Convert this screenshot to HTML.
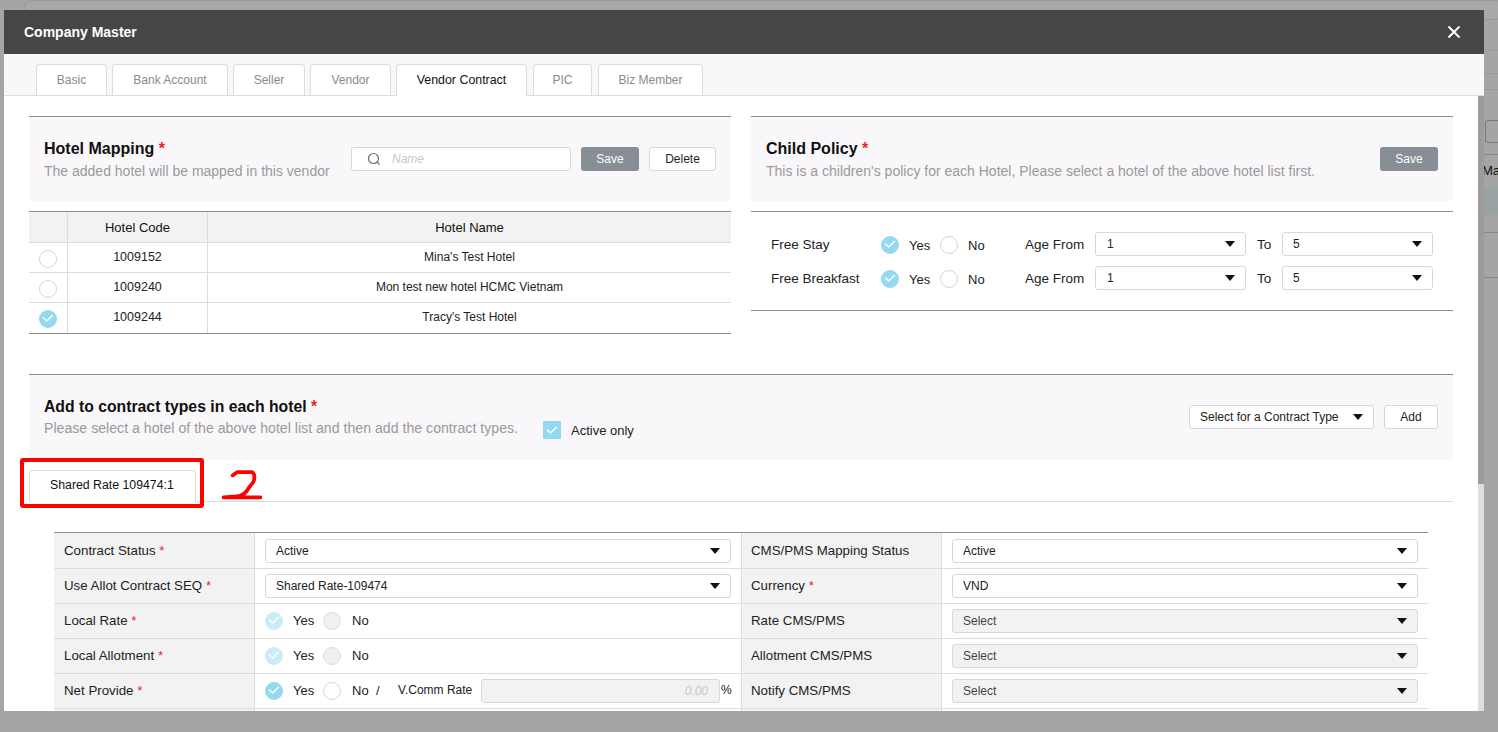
<!DOCTYPE html>
<html><head><meta charset="utf-8">
<style>
*{box-sizing:border-box;margin:0;padding:0}
html,body{width:1498px;height:732px;overflow:hidden;background:#a5a5a5;font-family:"Liberation Sans",sans-serif;color:#222}
.a{position:absolute}
.t{position:absolute;white-space:nowrap;line-height:1}
#bgtab{left:24px;top:0px;width:1480px;height:20px;border:1px solid #999;border-radius:8px;background:#a8a7aa}
#modal{left:4px;top:10px;width:1480px;height:701px;background:#fff;overflow:hidden}
#hdr{left:4px;top:10px;width:1480px;height:44px;background:#464646}
#tabbar{left:4px;top:54px;width:1480px;height:42px;background:#f8f7fa;border-bottom:1px solid #dcdcdc}
.tab{position:absolute;top:10px;height:31px;border:1px solid #dcdcdc;border-bottom:none;border-radius:4px 4px 0 0;background:#fff;color:#8a8a8a;font-size:12px;text-align:center;line-height:30px}
.tab.on{color:#111;height:32px;font-size:12.4px}
.sbox{position:absolute;background:#f9f7fa;border-top:1px solid #8c8c8c}
.ttl{font-size:16px;font-weight:700;color:#111}
.req{color:#e8262a}
.sub{font-size:14px;color:#9a9a9a}
.btn-g{position:absolute;background:#878e95;color:#fff;border-radius:3px;font-size:12px;text-align:center}
.btn-w{position:absolute;background:#fff;color:#222;border:1px solid #d8d8d8;border-radius:3px;font-size:12px;text-align:center}
.inp{position:absolute;background:#fff;border:1px solid #d8d8d8;border-radius:3px}
.radio{position:absolute;width:18px;height:18px;border-radius:50%;border:1px solid #d6d6d6;background:#fff}
.radio.on{background:#93d9f0;border-color:#93d9f0}
.radio.dis{background:#c9ecf7;border-color:#c9ecf7}
.radio.gray{background:#f0f0f0;border-color:#dcdcdc}
.chk{position:absolute;left:4px;top:4px;width:9px;height:5px;border-left:1.5px solid #fff;border-bottom:1.5px solid #fff;transform:rotate(-45deg)}
.arr{position:absolute;width:0;height:0;border-left:5px solid transparent;border-right:5px solid transparent;border-top:6px solid #111}
.sel{position:absolute;background:#fff;border:1px solid #d8d8d8;border-radius:3px;font-size:12.5px;color:#222}
.sel.dis{background:#f2f2f2}
.flab{font-size:13.3px;color:#222}
.line{position:absolute;height:1px}
.vline{position:absolute;width:1px}
</style></head><body>
<div class="a" id="bgtab"></div>
<!-- background right details -->
<div class="a" style="left:1484px;top:50px;width:14px;height:1px;background:#999"></div>
<div class="a" style="left:1484px;top:73px;width:14px;height:1px;background:#999"></div>
<div class="a" style="left:1484px;top:89px;width:14px;height:1px;background:#999"></div>
<div class="a" style="left:1485px;top:120px;width:20px;height:23px;border:1px solid #777;border-radius:3px"></div>
<div class="a" style="left:1484px;top:154px;width:14px;height:1px;background:#888"></div>
<div class="t" style="left:1482px;top:164px;font-size:13px;color:#111">Ma</div>
<div class="a" style="left:1484px;top:187px;width:14px;height:28px;background:#9aa2a4"></div>
<div class="a" style="left:1484px;top:232px;width:14px;height:1px;background:#888"></div>
<div class="a" style="left:1484px;top:277px;width:14px;height:1px;background:#888"></div>

<div class="a" id="modal"></div>
<div class="a" id="hdr">
  <div class="t" style="left:20px;top:15px;font-size:14px;font-weight:700;color:#fff">Company Master</div>
  <svg class="a" style="left:1443px;top:15px" width="14" height="14" viewBox="0 0 14 14"><path d="M1.5 1.5L12.5 12.5M12.5 1.5L1.5 12.5" stroke="#fff" stroke-width="2"/></svg>
</div>
<div class="a" id="tabbar">
  <div class="tab" style="left:32px;width:71px">Basic</div>
  <div class="tab" style="left:108px;width:116px">Bank Account</div>
  <div class="tab" style="left:229px;width:72px">Seller</div>
  <div class="tab" style="left:306px;width:81px">Vendor</div>
  <div class="tab on" style="left:392px;width:131px">Vendor Contract</div>
  <div class="tab" style="left:529px;width:59px">PIC</div>
  <div class="tab" style="left:594px;width:105px">Biz Member</div>
</div>
<!-- scrollbar -->
<div class="a" style="left:1478px;top:96px;width:6px;height:615px;background:#dfdfdf"></div>
<div class="a" style="left:1478px;top:96px;width:6px;height:388px;background:#9c9c9c"></div>

<!-- Hotel Mapping section -->
<div class="sbox" style="left:29px;top:116px;width:702px;height:85px"></div>
<div class="t ttl" style="left:44px;top:141px">Hotel Mapping <span class="req">*</span></div>
<div class="t sub" style="left:44px;top:164px">The added hotel will be mapped in this vendor</div>
<div class="inp" style="left:351px;top:147px;width:220px;height:24px"></div>
<svg class="a" style="left:367px;top:152px" width="14" height="14" viewBox="0 0 14 14"><circle cx="6.5" cy="6.5" r="5" fill="none" stroke="#707070" stroke-width="1.2"/><path d="M10 10L12.5 12.5" stroke="#707070" stroke-width="1.3"/></svg>
<div class="t" style="left:392px;top:153px;font-size:12px;font-style:italic;color:#c8c8c8">Name</div>
<div class="btn-g" style="left:581px;top:147px;width:58px;height:24px;line-height:24px">Save</div>
<div class="btn-w" style="left:649px;top:147px;width:67px;height:24px;line-height:22px">Delete</div>

<!-- Hotel table -->
<div class="a" style="left:29px;top:211px;width:702px;height:1px;background:#8c8c8c"></div>
<div class="a" style="left:29px;top:212px;width:702px;height:30px;background:#f2f2f2"></div>
<div class="a" style="left:29px;top:242px;width:702px;height:1px;background:#dcdcdc"></div>
<div class="a" style="left:29px;top:272px;width:702px;height:1px;background:#dcdcdc"></div>
<div class="a" style="left:29px;top:302px;width:702px;height:1px;background:#dcdcdc"></div>
<div class="a" style="left:29px;top:333px;width:702px;height:1px;background:#8c8c8c"></div>
<div class="a" style="left:67px;top:212px;width:1px;height:121px;background:#dcdcdc"></div>
<div class="a" style="left:207px;top:212px;width:1px;height:121px;background:#dcdcdc"></div>
<div class="t" style="left:68px;width:139px;text-align:center;top:221px;font-size:13px;color:#111">Hotel Code</div>
<div class="t" style="left:208px;width:523px;text-align:center;top:221px;font-size:13px;color:#111">Hotel Name</div>
<div class="radio" style="left:39px;top:250px"></div>
<div class="radio" style="left:39px;top:280px"></div>
<div class="radio on" style="left:39px;top:310px"><svg class="a" style="left:-1px;top:-1px" width="18" height="18" viewBox="0 0 18 18"><path d="M4 7.4L7.7 11L13.8 5" fill="none" stroke="#fff" stroke-width="1.4"/></svg></div>
<div class="t" style="left:68px;width:139px;text-align:center;top:251px;font-size:12.5px;color:#222">1009152</div>
<div class="t" style="left:68px;width:139px;text-align:center;top:281px;font-size:12.5px;color:#222">1009240</div>
<div class="t" style="left:68px;width:139px;text-align:center;top:311px;font-size:12.5px;color:#222">1009244</div>
<div class="t" style="left:208px;width:523px;text-align:center;top:251px;font-size:12px;color:#222">Mina's Test Hotel</div>
<div class="t" style="left:208px;width:523px;text-align:center;top:281px;font-size:12px;color:#222">Mon test new hotel HCMC Vietnam</div>
<div class="t" style="left:208px;width:523px;text-align:center;top:311px;font-size:12px;color:#222">Tracy's Test Hotel</div>

<!-- Child Policy section -->
<div class="sbox" style="left:751px;top:116px;width:702px;height:85px"></div>
<div class="t ttl" style="left:766px;top:141px">Child Policy <span class="req">*</span></div>
<div class="t sub" style="left:766px;top:164px">This is a children's policy for each Hotel, Please select a hotel of the above hotel list first.</div>
<div class="btn-g" style="left:1380px;top:147px;width:58px;height:24px;line-height:24px">Save</div>
<div class="a" style="left:751px;top:211px;width:702px;height:1px;background:#8c8c8c"></div>
<div class="a" style="left:751px;top:310px;width:702px;height:1px;background:#8c8c8c"></div>

<div class="t" style="left:771px;top:238px;font-size:13.5px;color:#222">Free Stay</div>
<div class="t" style="left:771px;top:272px;font-size:13.5px;color:#222">Free Breakfast</div>
<div class="radio on" style="left:881px;top:236px"><svg class="a" style="left:-1px;top:-1px" width="18" height="18" viewBox="0 0 18 18"><path d="M4 7.4L7.7 11L13.8 5" fill="none" stroke="#fff" stroke-width="1.4"/></svg></div>
<div class="radio on" style="left:881px;top:270px"><svg class="a" style="left:-1px;top:-1px" width="18" height="18" viewBox="0 0 18 18"><path d="M4 7.4L7.7 11L13.8 5" fill="none" stroke="#fff" stroke-width="1.4"/></svg></div>
<div class="t" style="left:909px;top:239px;font-size:13px;color:#222">Yes</div>
<div class="t" style="left:909px;top:273px;font-size:13px;color:#222">Yes</div>
<div class="radio" style="left:940px;top:236px"></div>
<div class="radio" style="left:940px;top:270px"></div>
<div class="t" style="left:968px;top:239px;font-size:13px;color:#222">No</div>
<div class="t" style="left:968px;top:273px;font-size:13px;color:#222">No</div>
<div class="t" style="left:1025px;top:238px;font-size:13.5px;color:#222">Age From</div>
<div class="t" style="left:1025px;top:272px;font-size:13.5px;color:#222">Age From</div>
<div class="sel" style="left:1095px;top:232px;width:151px;height:24px"><div class="t" style="left:11px;top:5px;font-size:12px">1</div><div class="arr" style="left:129px;top:8px"></div></div>
<div class="sel" style="left:1095px;top:266px;width:151px;height:24px"><div class="t" style="left:11px;top:5px;font-size:12px">1</div><div class="arr" style="left:129px;top:8px"></div></div>
<div class="t" style="left:1257px;top:238px;font-size:13.5px;color:#222">To</div>
<div class="t" style="left:1257px;top:272px;font-size:13.5px;color:#222">To</div>
<div class="sel" style="left:1282px;top:232px;width:151px;height:24px"><div class="t" style="left:10px;top:5px;font-size:12px">5</div><div class="arr" style="left:129px;top:8px"></div></div>
<div class="sel" style="left:1282px;top:266px;width:151px;height:24px"><div class="t" style="left:10px;top:5px;font-size:12px">5</div><div class="arr" style="left:129px;top:8px"></div></div>

<!-- Contract types section -->
<div class="sbox" style="left:29px;top:374px;width:1424px;height:86px"></div>
<div class="t ttl" style="left:44px;top:399px;font-size:15.75px">Add to contract types in each hotel <span class="req">*</span></div>
<div class="t sub" style="left:44px;top:421px;font-size:14.15px">Please select a hotel of the above hotel list and then add the contract types.</div>
<div class="a" style="left:543px;top:421px;width:18px;height:18px;background:#93d9f0;border-radius:1px"><svg class="a" style="left:0;top:1px" width="18" height="18" viewBox="0 0 18 18"><path d="M4 7.4L7.7 11L13.8 5" fill="none" stroke="#fff" stroke-width="1.4"/></svg></div>
<div class="t" style="left:571px;top:424px;font-size:13px;color:#222">Active only</div>
<div class="sel" style="left:1189px;top:405px;width:185px;height:24px"><div class="t" style="left:10px;top:5px;font-size:12px">Select for a Contract Type</div><div class="arr" style="left:163px;top:8px"></div></div>
<div class="btn-w" style="left:1384px;top:405px;width:54px;height:24px;line-height:22px">Add</div>

<!-- contract tab -->
<div class="a" style="left:29px;top:501px;width:1424px;height:1px;background:#dcdcdc"></div>
<div class="a" style="left:29px;top:470px;width:167px;height:32px;background:#fff;border:1px solid #dcdcdc;border-bottom:none;border-radius:3px 3px 0 0"></div>
<div class="t" style="left:50px;top:479px;font-size:12.3px;color:#111">Shared Rate 109474:1</div>
<div class="a" style="left:20px;top:458px;width:184px;height:50px;border:4.5px solid #fe0000;border-radius:3px"></div>
<svg class="a" style="left:210px;top:460px" width="60" height="45" viewBox="210 460 60 45"><path d="M232.6 475.4 L237 472.2 L252.2 472.2 Q254.6 473.6 254.4 478 Q254.2 482 251 485 Q249 487.5 247.5 490 Q245 494 240 495.8 L236 496.3 L223.5 497.3 L260.5 497.3" fill="none" stroke="#fe0000" stroke-width="3.7" stroke-linecap="round" stroke-linejoin="round"/></svg>

<!-- form table -->
<div class="a" style="left:54px;top:532px;width:1374px;height:1px;background:#8c8c8c"></div>
<div class="a" style="left:54px;top:533px;width:200px;height:178px;background:#f2f2f2"></div>
<div class="a" style="left:741px;top:533px;width:200px;height:178px;background:#f2f2f2"></div>
<div class="a" style="left:254px;top:533px;width:1px;height:178px;background:#dcdcdc"></div>
<div class="a" style="left:741px;top:533px;width:1px;height:178px;background:#dcdcdc"></div>
<div class="a" style="left:941px;top:533px;width:1px;height:178px;background:#dcdcdc"></div>
<div class="a" style="left:54px;top:568px;width:1374px;height:1px;background:#dcdcdc"></div>
<div class="a" style="left:54px;top:603px;width:1374px;height:1px;background:#dcdcdc"></div>
<div class="a" style="left:54px;top:638px;width:1374px;height:1px;background:#dcdcdc"></div>
<div class="a" style="left:54px;top:673px;width:1374px;height:1px;background:#dcdcdc"></div>
<div class="a" style="left:54px;top:708px;width:1374px;height:1px;background:#dcdcdc"></div>

<div class="t flab" style="left:64px;top:544px">Contract Status <span class="req">*</span></div>
<div class="t flab" style="left:64px;top:579px">Use Allot Contract SEQ <span class="req">*</span></div>
<div class="t flab" style="left:64px;top:614px">Local Rate <span class="req">*</span></div>
<div class="t flab" style="left:64px;top:649px">Local Allotment <span class="req">*</span></div>
<div class="t flab" style="left:64px;top:684px">Net Provide <span class="req">*</span></div>

<div class="sel" style="left:265px;top:539px;width:466px;height:24px"><div class="t" style="left:10px;top:5px;font-size:12px">Active</div><div class="arr" style="left:444px;top:8px"></div></div>
<div class="sel" style="left:265px;top:574px;width:466px;height:24px"><div class="t" style="left:10px;top:5px;font-size:12px">Shared Rate-109474</div><div class="arr" style="left:444px;top:8px"></div></div>
<div class="radio dis" style="left:265px;top:612px"><svg class="a" style="left:-1px;top:-1px" width="18" height="18" viewBox="0 0 18 18"><path d="M4 7.4L7.7 11L13.8 5" fill="none" stroke="#fff" stroke-width="1.4"/></svg></div>
<div class="t" style="left:293px;top:614px;font-size:13px;color:#222">Yes</div>
<div class="radio gray" style="left:323px;top:612px"></div>
<div class="t" style="left:352px;top:614px;font-size:13px;color:#222">No</div>
<div class="radio dis" style="left:265px;top:647px"><svg class="a" style="left:-1px;top:-1px" width="18" height="18" viewBox="0 0 18 18"><path d="M4 7.4L7.7 11L13.8 5" fill="none" stroke="#fff" stroke-width="1.4"/></svg></div>
<div class="t" style="left:293px;top:649px;font-size:13px;color:#222">Yes</div>
<div class="radio gray" style="left:323px;top:647px"></div>
<div class="t" style="left:352px;top:649px;font-size:13px;color:#222">No</div>
<div class="radio on" style="left:265px;top:682px"><svg class="a" style="left:-1px;top:-1px" width="18" height="18" viewBox="0 0 18 18"><path d="M4 7.4L7.7 11L13.8 5" fill="none" stroke="#fff" stroke-width="1.4"/></svg></div>
<div class="t" style="left:293px;top:684px;font-size:13px;color:#222">Yes</div>
<div class="radio" style="left:323px;top:682px"></div>
<div class="t" style="left:352px;top:684px;font-size:13px;color:#222">No</div>
<div class="t" style="left:376px;top:684px;font-size:13px;color:#222">/</div>
<div class="t" style="left:398px;top:684px;font-size:12px;color:#222">V.Comm Rate</div>
<div class="sel dis" style="left:481px;top:679px;width:239px;height:24px"><div class="t" style="right:11px;top:5px;font-size:12px;font-style:italic;color:#c8c8c8">0.00</div></div>
<div class="t" style="left:721px;top:684px;font-size:12px;color:#222">%</div>

<div class="t flab" style="left:751px;top:544px">CMS/PMS Mapping Status</div>
<div class="t flab" style="left:751px;top:579px">Currency <span class="req">*</span></div>
<div class="t flab" style="left:751px;top:614px">Rate CMS/PMS</div>
<div class="t flab" style="left:751px;top:649px">Allotment CMS/PMS</div>
<div class="t flab" style="left:751px;top:684px">Notify CMS/PMS</div>
<div class="sel" style="left:952px;top:539px;width:466px;height:24px"><div class="t" style="left:10px;top:5px;font-size:12px">Active</div><div class="arr" style="left:444px;top:8px"></div></div>
<div class="sel" style="left:952px;top:574px;width:466px;height:24px"><div class="t" style="left:10px;top:5px;font-size:12px">VND</div><div class="arr" style="left:444px;top:8px"></div></div>
<div class="sel dis" style="left:952px;top:609px;width:466px;height:24px"><div class="t" style="left:10px;top:5px;font-size:12px;color:#444">Select</div><div class="arr" style="left:444px;top:8px"></div></div>
<div class="sel dis" style="left:952px;top:644px;width:466px;height:24px"><div class="t" style="left:10px;top:5px;font-size:12px;color:#444">Select</div><div class="arr" style="left:444px;top:8px"></div></div>
<div class="sel dis" style="left:952px;top:679px;width:466px;height:24px"><div class="t" style="left:10px;top:5px;font-size:12px;color:#444">Select</div><div class="arr" style="left:444px;top:8px"></div></div>

<!-- bottom overlay strip below modal -->
<div class="a" style="left:0;top:711px;width:1498px;height:21px;background:#a5a5a5"></div>

</body></html>
